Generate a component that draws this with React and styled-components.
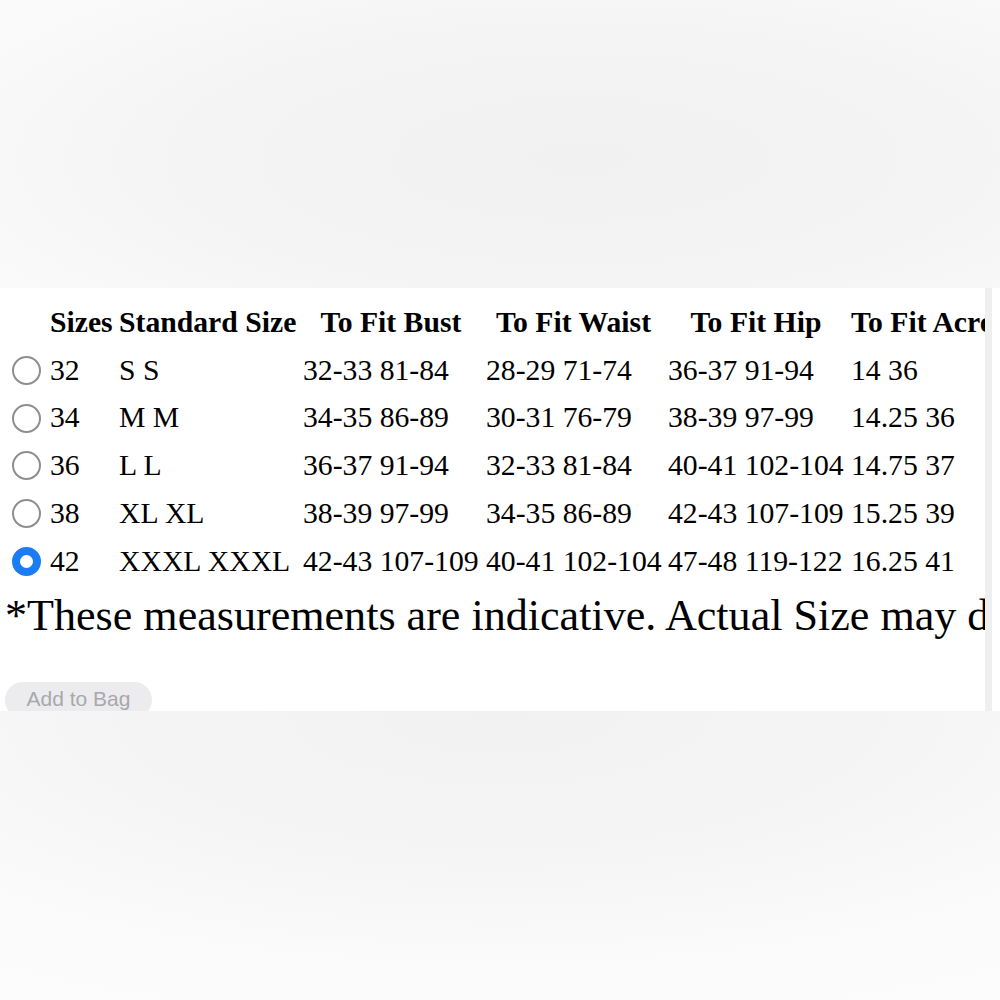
import React, { useState } from "react";
import styled, { createGlobalStyle } from "styled-components";

const Global = createGlobalStyle`
  html, body { margin: 0; padding: 0; background: #f5f5f5; }
  #root { width: 1000px; height: 1000px; }
`;

const Page = styled.div`
  width: 1000px;
  height: 1000px;
  display: flex;
  flex-direction: column;
  overflow: hidden;
`;

const TopShade = styled.div`
  height: 288px;
  flex: none;
  background: radial-gradient(ellipse 70% 80% at 58% 55%, #f1f1f1 0%, #f3f3f3 45%, #f8f8f8 85%, #fafafa 100%);
`;

const BottomShade = styled.div`
  flex: 1;
  background: radial-gradient(ellipse 90% 110% at 50% 0%, #f1f1f1 0%, #f5f5f5 45%, #fbfbfb 85%, #fcfcfc 100%);
`;

const Panel = styled.div`
  height: 423px;
  flex: none;
  background: #ffffff;
  display: flex;
  overflow: hidden;
`;

const Content = styled.div`
  width: 985px;
  flex: none;
  overflow: hidden;
  padding: 11.5px 0 0 5px;
  box-sizing: border-box;
  display: flex;
  flex-direction: column;
  align-items: flex-start;
`;

const Track = styled.div`
  width: 7px;
  flex: none;
  background: #efefef;
`;

const Table = styled.table`
  border-collapse: collapse;
  table-layout: fixed;
  width: 1140px;
  flex: none;
  font-family: "Liberation Serif", "Times New Roman", serif;
  font-size: 29.7px;
  color: #000;
`;

const Th = styled.th`
  font-weight: bold;
  white-space: nowrap;
  line-height: 1;
  height: 47px;
  padding: 0 ${(p) => p.$gap ?? 7}px 0 0;
  box-sizing: border-box;
  vertical-align: middle;
  text-align: ${(p) => (p.$left ? "left" : "center")};
`;

const Td = styled.td`
  white-space: nowrap;
  line-height: 1;
  height: 47.75px;
  padding: 0 7px 0 ${(p) => p.$lead ?? 0}px;
  box-sizing: border-box;
  vertical-align: middle;
  text-align: left;
`;

const Radio = styled.input.attrs({ type: "radio" })`
  appearance: none;
  -webkit-appearance: none;
  display: block;
  margin: 0;
  width: 29px;
  height: 29px;
  border-radius: 50%;
  box-sizing: border-box;
  border: 2.5px solid #8e8e8e;
  background: #fff;
  &:checked {
    border: 8.5px solid #1b7cf4;
    background: #fff;
  }
`;

const Note = styled.p`
  margin: 9px 0 0 0;
  font-family: "Liberation Serif", "Times New Roman", serif;
  font-size: 44.1px;
  line-height: 1;
  white-space: nowrap;
  color: #000;
`;

const BagButton = styled.button`
  margin-top: 44px;
  height: 36px;
  width: 147px;
  flex: none;
  border: none;
  border-radius: 18px;
  background: #ececee;
  color: #a8a8ac;
  font-family: "Liberation Sans", Arial, sans-serif;
  font-size: 21px;
  line-height: 1;
  padding: 0 0 4px 0;
  display: flex;
  align-items: center;
  justify-content: center;
  box-sizing: border-box;
`;

const rows = [
  ["32", "S S", "32-33 81-84", "28-29 71-74", "36-37 91-94", "14 36"],
  ["34", "M M", "34-35 86-89", "30-31 76-79", "38-39 97-99", "14.25 36"],
  ["36", "L L", "36-37 91-94", "32-33 81-84", "40-41 102-104", "14.75 37"],
  ["38", "XL XL", "38-39 97-99", "34-35 86-89", "42-43 107-109", "15.25 39"],
  ["42", "XXXL XXXL", "42-43 107-109", "40-41 102-104", "47-48 119-122", "16.25 41"],
];

export default function App() {
  const [sel, setSel] = useState("42");
  return (
    <>
      <Global />
      <Page>
        <TopShade />
        <Panel>
          <Content>
            <Table>
              <colgroup>
                <col style={{ width: 45 }} />
                <col style={{ width: 69 }} />
                <col style={{ width: 184 }} />
                <col style={{ width: 183 }} />
                <col style={{ width: 182 }} />
                <col style={{ width: 183 }} />
                <col style={{ width: 294 }} />
              </colgroup>
              <thead>
                <tr>
                  <Th />
                  <Th $gap={8}>Sizes</Th>
                  <Th>Standard Size</Th>
                  <Th>To Fit Bust</Th>
                  <Th>To Fit Waist</Th>
                  <Th>To Fit Hip</Th>
                  <Th $left>To Fit Across Shoulder</Th>
                </tr>
              </thead>
              <tbody>
                {rows.map((r) => (
                  <tr key={r[0]}>
                    <Td $lead={7}>
                      <Radio
                        name="size"
                        checked={sel === r[0]}
                        onChange={() => setSel(r[0])}
                      />
                    </Td>
                    {r.map((c, i) => (
                      <Td key={i}>{c}</Td>
                    ))}
                  </tr>
                ))}
              </tbody>
            </Table>
            <Note>*These measurements are indicative. Actual Size may differ slightly.</Note>
            <BagButton>Add to Bag</BagButton>
          </Content>
          <Track />
        </Panel>
        <BottomShade />
      </Page>
    </>
  );
}
